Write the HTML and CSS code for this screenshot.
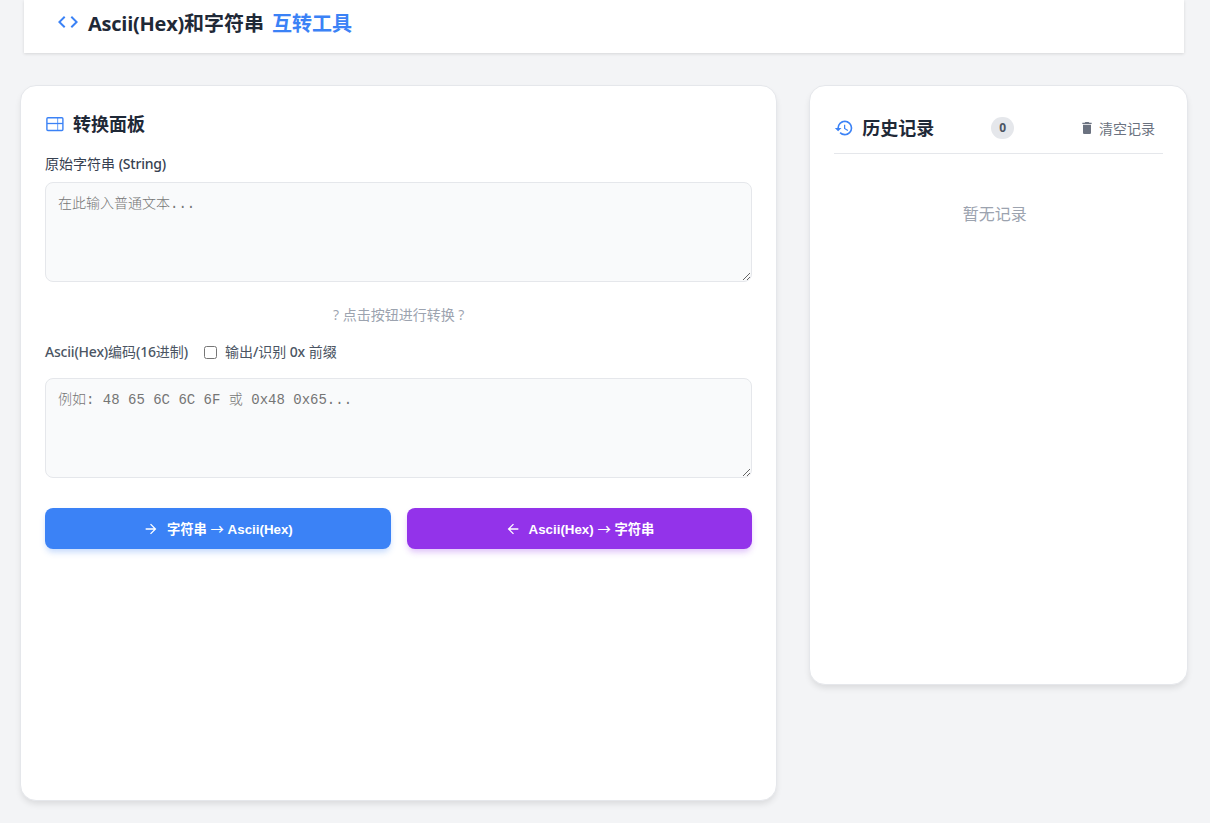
FILE: index.html
```
<!DOCTYPE html>
<html lang="zh-CN">
<head>
<meta charset="UTF-8">
<meta name="viewport" content="width=device-width, initial-scale=1.0">
<title>Ascii(Hex)和字符串互转工具</title>
<link rel="stylesheet" href="styles.css">
</head>
<body>
  <header class="header">
    <svg class="icon icon-code" viewBox="0 0 24 24"><path d="M9.4 16.6 4.8 12l4.6-4.6L8 6l-6 6 6 6zm5.2 0 4.6-4.6-4.6-4.6L16 6l6 6-6 6z"/></svg>
    <h1><span class="latin">Ascii(Hex)</span>和字符串</h1>
    <span class="accent">互转工具</span>
  </header>

  <main class="container">
    <!-- 转换面板 -->
    <section class="card panel">
      <div class="card-title">
        <svg class="icon icon-panel" viewBox="0 0 20 20"><rect x="1.9" y="3.7" width="16" height="12.8" rx="1" stroke="currentColor" stroke-width="1.4"/><path d="M2 9.5h16" stroke="currentColor" stroke-width="1.3"/><path d="M12.6 4v12.5" stroke="currentColor" stroke-width="1.2" opacity=".65"/></svg>
        <h2>转换面板</h2>
      </div>

      <label class="label" for="text-input">原始字符串 <span class="latin">(String)</span></label>
      <textarea id="text-input" placeholder="在此输入普通文本..."></textarea>

      <p class="hint">? 点击按钮进行转换 ?</p>

      <div class="hex-row">
        <label for="hex-input"><span class="latin">Ascii(Hex)</span>编码<span class="latin">(16</span>进制<span class="latin">)</span></label>
        <label class="check"><input type="checkbox" id="prefix"><span>输出<span class="latin">/</span>识别 <span class="latin">0x</span> 前缀</span></label>
      </div>
      <textarea id="hex-input" placeholder="例如: 48 65 6C 6C 6F 或 0x48 0x65..."></textarea>

      <div class="buttons">
        <button class="btn btn-blue" type="button">
          <svg class="icon icon-arrow" viewBox="0 0 24 24"><path d="M12 4l-1.41 1.41L16.17 11H4v2h12.17l-5.58 5.59L12 20l8-8z"/></svg>
          <span>字符串 <span class="to">→</span> Ascii(Hex)</span>
        </button>
        <button class="btn btn-purple" type="button">
          <svg class="icon icon-arrow" viewBox="0 0 24 24"><path d="M20 11H7.83l5.59-5.59L12 4l-8 8 8 8 1.41-1.41L7.83 13H20z"/></svg>
          <span>Ascii(Hex) <span class="to">→</span> 字符串</span>
        </button>
      </div>
    </section>

    <!-- 历史记录 -->
    <section class="card history">
      <div class="history-head">
        <div class="card-title">
          <svg class="icon icon-history" viewBox="0 0 24 24"><path d="M13 3a9 9 0 0 0-9 9H1l3.89 3.89.07.14L9 12H6c0-3.87 3.13-7 7-7s7 3.13 7 7-3.13 7-7 7c-1.93 0-3.68-.79-4.94-2.06l-1.42 1.42A8.95 8.95 0 0 0 13 21a9 9 0 0 0 0-18zm-1 5v5l4.28 2.54.72-1.21-3.5-2.08V8z"/></svg>
          <h2>历史记录</h2>
        </div>
        <span class="count">0</span>
        <button class="clear" type="button">
          <svg class="icon icon-trash" viewBox="0 0 24 24"><path d="M6 19c0 1.1.9 2 2 2h8c1.1 0 2-.9 2-2V7H6zM19 4h-3.5l-1-1h-5l-1 1H5v2h14z"/></svg>
          <span>清空记录</span>
        </button>
      </div>
      <p class="empty">暂无记录</p>
    </section>
  </main>
</body>
</html>
```
FILE: styles.css
```
* {
  box-sizing: border-box;
  margin: 0;
  padding: 0;
}
body {
  min-height: 100vh;
  background-color: #f3f4f6;
  color: #1f2937;
  font-family: "Open Sans", "Noto Sans CJK SC", sans-serif;
}
.icon {
  flex-shrink: 0;
  fill: currentColor;
}
.header {
  display: flex;
  align-items: center;
  width: 1160px;
  height: 53px;
  margin-left: 24px;
  padding: 0 32px 9px;
  background-color: #fff;
  box-shadow: 0 1px 3px rgba(0, 0, 0, 0.12);
  font-size: 20px;
}
.icon-code {
  width: 24px;
  height: 24px;
  margin-right: 8px;
  color: #3b82f6;
}
h1 {
  font-size: 20px;
  font-weight: 700;
}
h1 .latin {
  letter-spacing: -0.25px;
}
.accent {
  margin-left: 8px;
  color: #3b82f6;
  font-weight: 700;
}
.container {
  display: grid;
  grid-template-columns: 2fr 1fr;
  gap: 32px;
  align-items: start;
  width: 1168px;
  margin: 32px 0 0 20px;
  padding-bottom: 20px;
}
.card {
  padding: 24px;
  background-color: #fff;
  border: 1px solid #e5e7eb;
  border-radius: 16px;
  box-shadow: 0 4px 6px -1px rgba(0, 0, 0, 0.1);
}
.panel {
  height: 716px;
}
.history {
  height: 600px;
}
.card-title {
  display: flex;
  align-items: center;
  height: 28px;
  gap: 8px;
}
.card-title .icon {
  color: #3b82f6;
}
h2 {
  font-size: 18px;
  font-weight: 700;
  line-height: 28px;
}
.icon-panel {
  width: 20px;
  height: 20px;
}
.card-title .icon-panel {
  fill: none;
}
.icon-history {
  width: 20px;
  height: 20px;
}
.label {
  display: block;
  margin: 16px 0 8px;
  color: #374151;
  font-size: 14px;
  line-height: 20px;
}
.label .latin,
.hex-row .latin {
  font-family: "Noto Sans", "Open Sans", sans-serif;
  font-weight: 500;
  letter-spacing: -0.2px;
}
textarea {
  display: block;
  width: 100%;
  height: 100px;
  padding: 11px 12px 12px;
  background-color: #f9fafb;
  border: 1px solid #e5e7eb;
  border-radius: 8px;
  font-family: "Liberation Mono", "Noto Sans CJK SC", monospace;
  font-size: 14px;
  line-height: 20px;
  resize: vertical;
}
textarea::placeholder {
  color: #757575;
  font-weight: 300;
}
.hint {
  margin: 23px 0 17px;
  color: #9ca3af;
  font-size: 14px;
  line-height: 20px;
  text-align: center;
}
.hex-row {
  display: flex;
  align-items: center;
  gap: 16px;
  margin-bottom: 16px;
  color: #4b5563;
  font-size: 14px;
  line-height: 20px;
}
.check {
  display: flex;
  align-items: center;
  gap: 8px;
}
.check input {
  width: 13px;
  height: 13px;
}
.buttons {
  display: grid;
  grid-template-columns: 1fr 1fr;
  gap: 16px;
  margin-top: 30px;
}
.btn {
  display: flex;
  align-items: center;
  justify-content: center;
  gap: 8px;
  height: 41px;
  border: none;
  border-radius: 8px;
  color: #fff;
  font-family: "Liberation Sans", "Noto Sans CJK SC", sans-serif;
  font-size: 13.33px;
  font-weight: 700;
}
.to {
  font-family: "Noto Sans CJK SC", sans-serif;
  font-weight: 500;
  line-height: 1;
}
.btn-blue {
  background-color: #3b82f6;
  box-shadow: 0 4px 6px -1px rgba(59, 130, 246, 0.3);
}
.btn-purple {
  background-color: #9333ea;
  box-shadow: 0 4px 6px -1px rgba(147, 51, 234, 0.3);
}
.icon-arrow {
  width: 16px;
  height: 16px;
}
.history-head {
  display: flex;
  align-items: center;
  justify-content: space-between;
  height: 44px;
  padding: 0 8px 8px 0;
  border-bottom: 1px solid #e5e7eb;
}
.count {
  width: 23px;
  height: 22px;
  margin-right: 8px;
  background-color: #e5e7eb;
  border-radius: 11px;
  color: #4b5563;
  font-size: 12px;
  font-weight: 700;
  line-height: 22px;
  text-align: center;
}
.clear {
  display: flex;
  align-items: center;
  gap: 4px;
  background: none;
  border: none;
  color: #6b7280;
  font-family: inherit;
  font-size: 14px;
}
.icon-trash {
  width: 16px;
  height: 16px;
}
.empty {
  margin-top: 48px;
  padding-right: 8px;
  color: #9ca3af;
  font-size: 16px;
  line-height: 24px;
  text-align: center;
}
```
